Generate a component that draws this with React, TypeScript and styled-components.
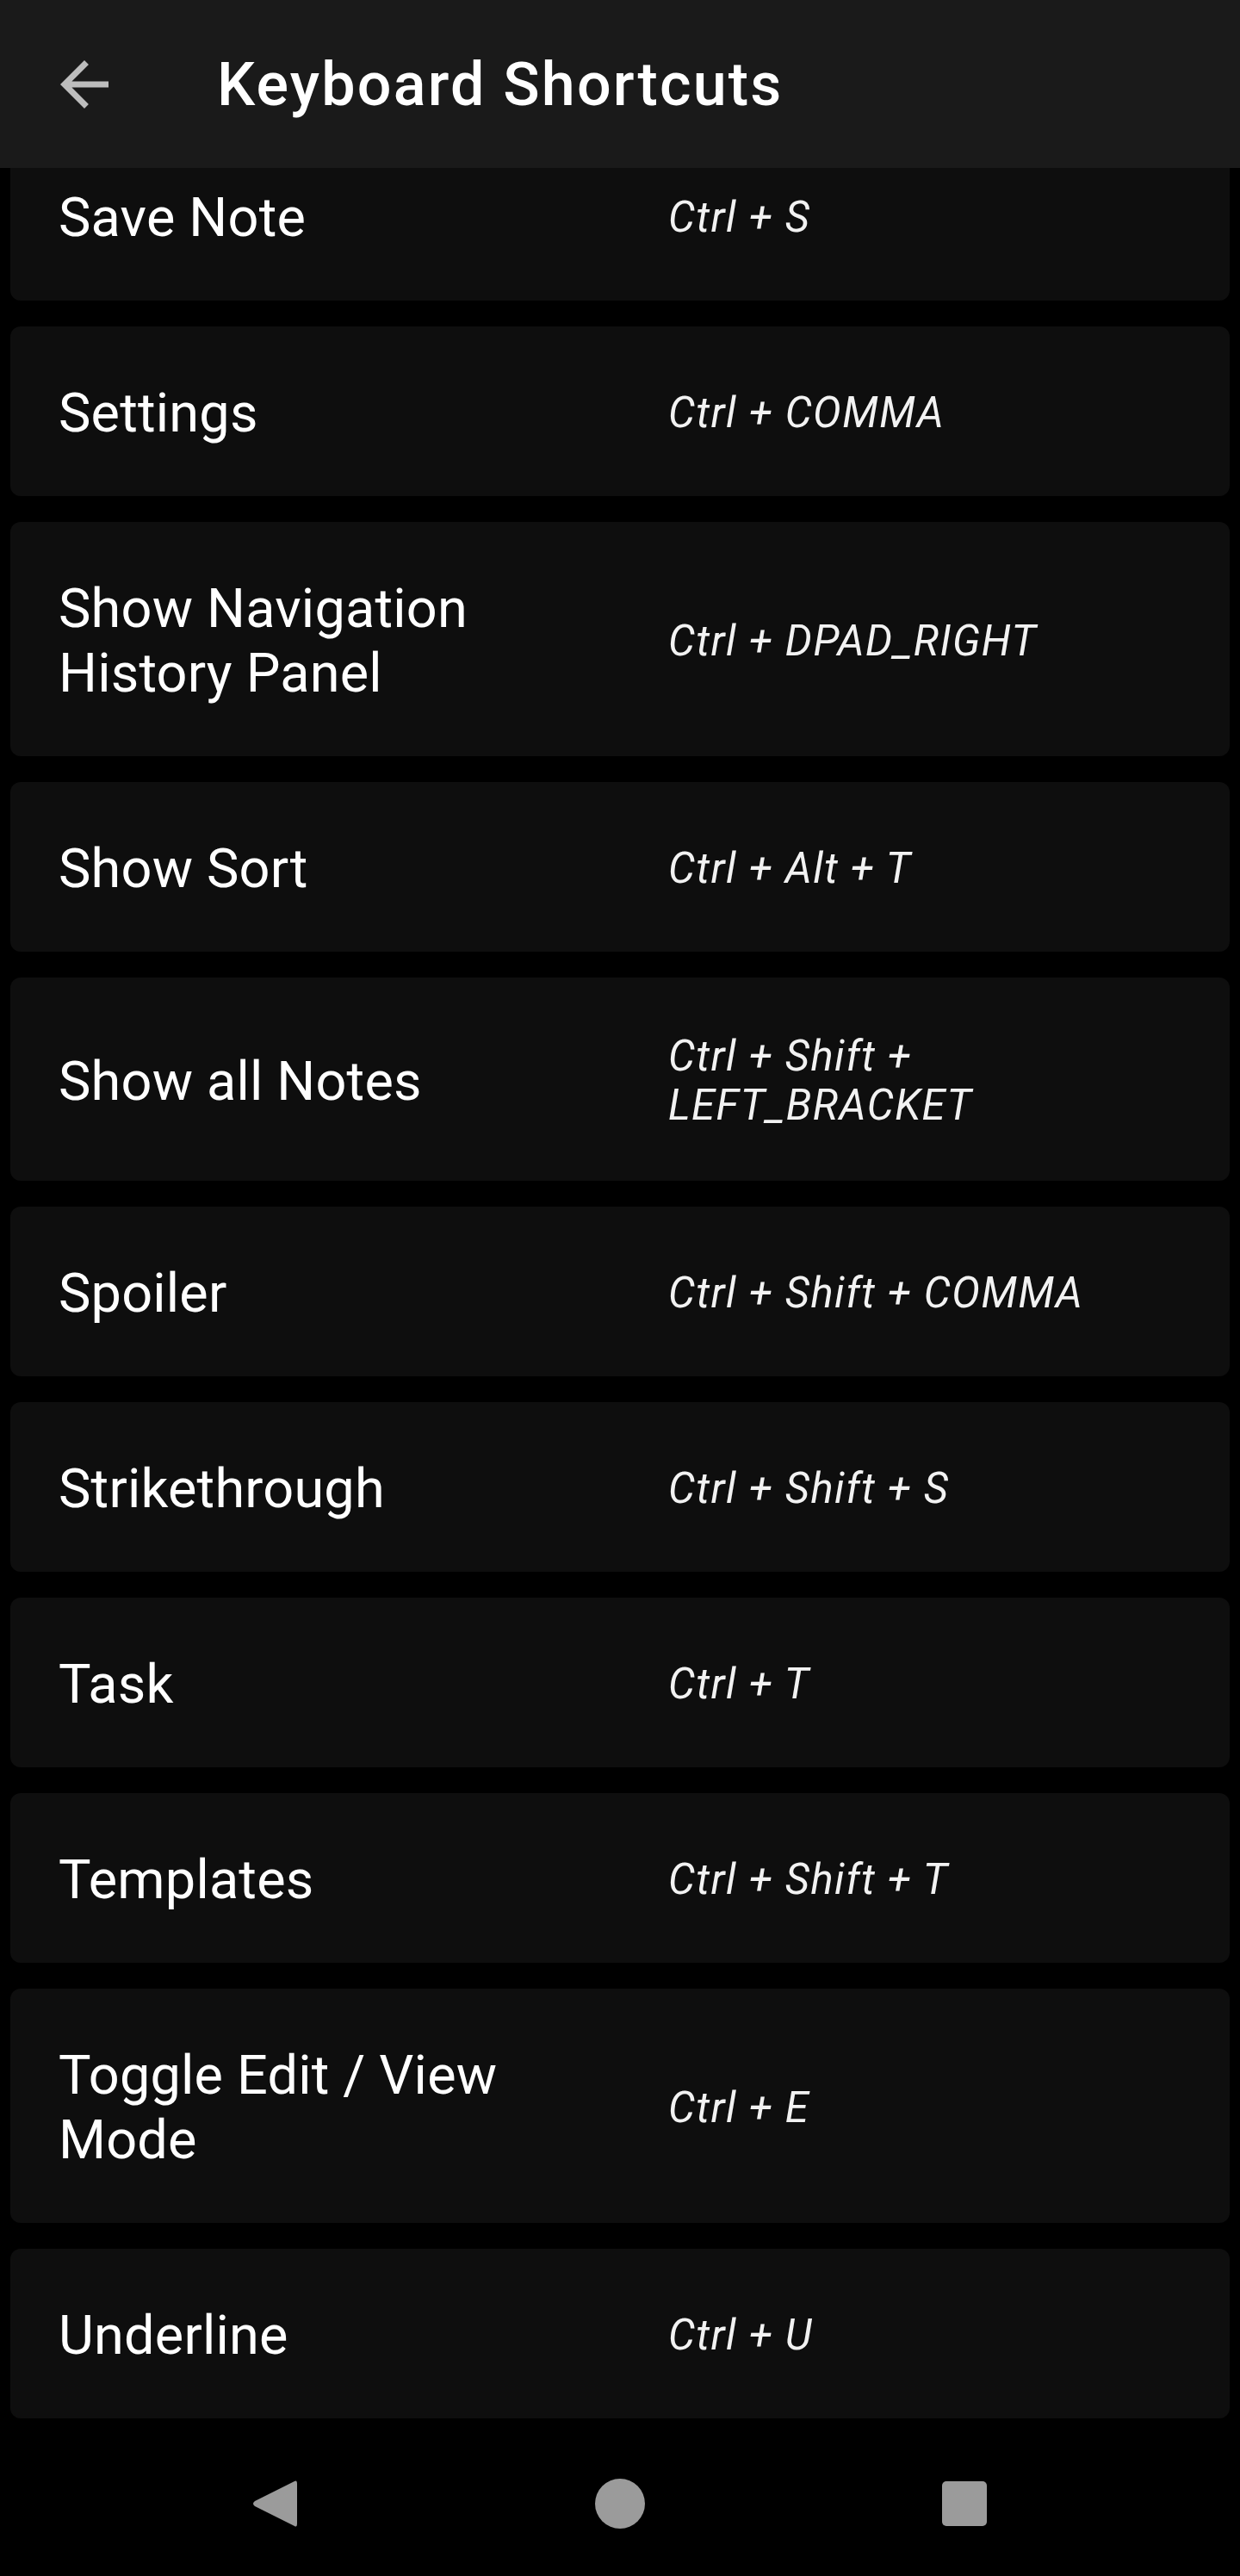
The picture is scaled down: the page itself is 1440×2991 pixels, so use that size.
import React from "react";
import styled, { createGlobalStyle } from "styled-components";

const GlobalStyle = createGlobalStyle`
  html, body {
    margin: 0;
    padding: 0;
    background: #000000;
  }
  * { box-sizing: border-box; }
  body {
    font-family: Roboto, "Noto Sans", "Liberation Sans", sans-serif;
    -webkit-font-smoothing: antialiased;
  }
`;

const Screen = styled.div`
  height: 2991px;
  display: flex;
  flex-direction: column;
  background: #000000;
  overflow: hidden;
`;

const TopBar = styled.header`
  flex: 0 0 195px;
  display: flex;
  align-items: center;
  background: #1a1a1a;
  padding-left: 56px;
  position: relative;
  z-index: 2;
`;

const BackButton = styled.button`
  width: 84px;
  height: 84px;
  padding: 0;
  border: none;
  background: transparent;
  display: flex;
  align-items: center;
  justify-content: center;
  color: #bdbdbd;
`;

const Title = styled.h1`
  margin: 0 0 0 112px;
  font-family: Roboto, "Noto Sans", sans-serif;
  font-weight: 500;
  font-size: 70px;
  line-height: 82px;
  letter-spacing: 2.2px;
  color: #ffffff;
`;

const List = styled.main`
  flex: 1 1 auto;
  min-height: 0;
  display: flex;
  flex-direction: column;
  justify-content: flex-end;
  overflow: hidden;
  padding: 0 12px;
`;

const Card = styled.div`
  flex: 0 0 auto;
  margin: 15px 0;
  padding: 63px 56px 59px 56px;
  background: #0e0e0e;
  border-radius: 12px;
  display: grid;
  grid-template-columns: 1fr 1fr;
  column-gap: 112px;
  align-items: center;
`;

const Name = styled.div`
  font-family: Roboto, "Noto Sans", sans-serif;
  font-weight: 400;
  font-size: 63px;
  line-height: 75px;
  letter-spacing: 0.2px;
  color: #ffffff;
`;

const Keys = styled.div`
  font-family: Roboto, "Noto Sans", sans-serif;
  font-style: italic;
  font-weight: 400;
  font-size: 49px;
  line-height: 57px;
  letter-spacing: 1.5px;
  color: #f2f2f2;
`;

const NavBar = styled.nav`
  flex: 0 0 168px;
  display: flex;
  align-items: center;
  justify-content: center;
  background: #000000;
`;

const NavSlot = styled.div`
  width: 400px;
  height: 168px;
  display: flex;
  align-items: center;
  justify-content: center;
`;

const shortcuts = [
  { name: "Save Note", keys: "Ctrl + S" },
  { name: "Settings", keys: "Ctrl + COMMA" },
  { name: "Show Navigation History Panel", keys: "Ctrl + DPAD_RIGHT" },
  { name: "Show Sort", keys: "Ctrl + Alt + T" },
  { name: "Show all Notes", keys: "Ctrl + Shift + LEFT_BRACKET" },
  { name: "Spoiler", keys: "Ctrl + Shift + COMMA" },
  { name: "Strikethrough", keys: "Ctrl + Shift + S" },
  { name: "Task", keys: "Ctrl + T" },
  { name: "Templates", keys: "Ctrl + Shift + T" },
  { name: "Toggle Edit / View Mode", keys: "Ctrl + E" },
  { name: "Underline", keys: "Ctrl + U" },
];

const ArrowBack = () => (
  <svg width="84" height="84" viewBox="0 0 24 24" fill="currentColor">
    <path d="M20 11H7.83l5.59-5.59L12 4l-8 8 8 8 1.41-1.41L7.83 13H20v-2z" />
  </svg>
);

const NavBack = () => (
  <svg width="56" height="60" viewBox="0 0 56 60">
    <path
      d="M50 4 Q53 2 53 7 L53 53 Q53 58 50 56 L4 33 Q0 30 4 27 Z"
      fill="#9b9b9b"
    />
  </svg>
);

const NavHome = () => (
  <svg width="60" height="60" viewBox="0 0 60 60">
    <circle cx="30" cy="30" r="29" fill="#9b9b9b" />
  </svg>
);

const NavRecents = () => (
  <svg width="54" height="54" viewBox="0 0 54 54">
    <rect x="1" y="1" width="52" height="52" rx="5" fill="#9b9b9b" />
  </svg>
);

export default function App() {
  return (
    <>
      <GlobalStyle />
      <Screen>
        <TopBar>
          <BackButton aria-label="Back">
            <ArrowBack />
          </BackButton>
          <Title>Keyboard Shortcuts</Title>
        </TopBar>
        <List>
          {shortcuts.map((s) => (
            <Card key={s.name}>
              <Name>{s.name}</Name>
              <Keys>{s.keys}</Keys>
            </Card>
          ))}
        </List>
        <NavBar>
          <NavSlot>
            <NavBack />
          </NavSlot>
          <NavSlot>
            <NavHome />
          </NavSlot>
          <NavSlot>
            <NavRecents />
          </NavSlot>
        </NavBar>
      </Screen>
    </>
  );
}
